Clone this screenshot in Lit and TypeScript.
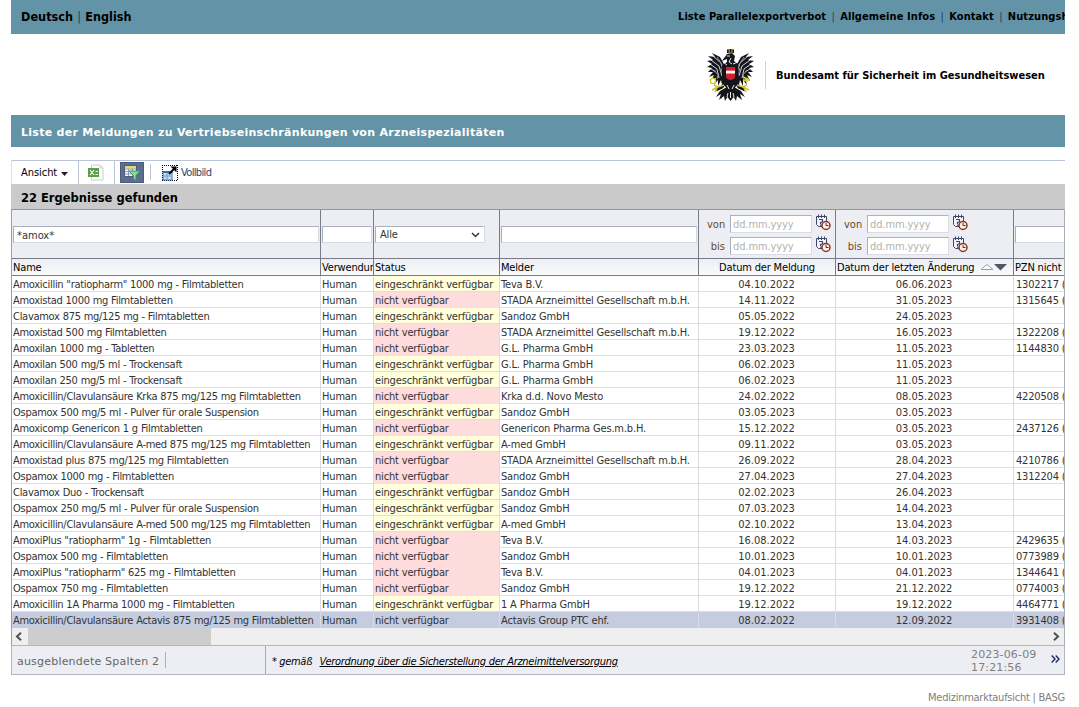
import { LitElement, html, css, svg } from 'lit';
import { customElement, property } from 'lit/decorators.js';
import { classMap } from 'lit/directives/class-map.js';

type Row = [name: string, limited: boolean, reporter: string, reported: string, changed: string, pzn: string];

const ROWS: Row[] = [
  ['Amoxicillin "ratiopharm" 1000 mg - Filmtabletten', true, 'Teva B.V.', '04.10.2022', '06.06.2023', '1302217 ('],
  ['Amoxistad 1000 mg Filmtabletten', false, 'STADA Arzneimittel Gesellschaft m.b.H.', '14.11.2022', '31.05.2023', '1315645 ('],
  ['Clavamox 875 mg/125 mg - Filmtabletten', true, 'Sandoz GmbH', '05.05.2022', '24.05.2023', ''],
  ['Amoxistad 500 mg Filmtabletten', false, 'STADA Arzneimittel Gesellschaft m.b.H.', '19.12.2022', '16.05.2023', '1322208 ('],
  ['Amoxilan 1000 mg - Tabletten', false, 'G.L. Pharma GmbH', '23.03.2023', '11.05.2023', '1144830 ('],
  ['Amoxilan 500 mg/5 ml - Trockensaft', true, 'G.L. Pharma GmbH', '06.02.2023', '11.05.2023', ''],
  ['Amoxilan 250 mg/5 ml - Trockensaft', true, 'G.L. Pharma GmbH', '06.02.2023', '11.05.2023', ''],
  ['Amoxicillin/Clavulansäure Krka 875 mg/125 mg Filmtabletten', false, 'Krka d.d. Novo Mesto', '24.02.2022', '08.05.2023', '4220508 ('],
  ['Ospamox 500 mg/5 ml - Pulver für orale Suspension', true, 'Sandoz GmbH', '03.05.2023', '03.05.2023', ''],
  ['Amoxicomp Genericon 1 g Filmtabletten', false, 'Genericon Pharma Ges.m.b.H.', '15.12.2022', '03.05.2023', '2437126 ('],
  ['Amoxicillin/Clavulansäure A-med 875 mg/125 mg Filmtabletten', true, 'A-med GmbH', '09.11.2022', '03.05.2023', ''],
  ['Amoxistad plus 875 mg/125 mg Filmtabletten', false, 'STADA Arzneimittel Gesellschaft m.b.H.', '26.09.2022', '28.04.2023', '4210786 ('],
  ['Ospamox 1000 mg - Filmtabletten', false, 'Sandoz GmbH', '27.04.2023', '27.04.2023', '1312204 ('],
  ['Clavamox Duo - Trockensaft', true, 'Sandoz GmbH', '02.02.2023', '26.04.2023', ''],
  ['Ospamox 250 mg/5 ml - Pulver für orale Suspension', true, 'Sandoz GmbH', '07.03.2023', '14.04.2023', ''],
  ['Amoxicillin/Clavulansäure A-med 500 mg/125 mg Filmtabletten', true, 'A-med GmbH', '02.10.2022', '13.04.2023', ''],
  ['AmoxiPlus "ratiopharm" 1g - Filmtabletten', false, 'Teva B.V.', '16.08.2022', '14.03.2023', '2429635 ('],
  ['Ospamox 500 mg - Filmtabletten', false, 'Sandoz GmbH', '10.01.2023', '10.01.2023', '0773989 ('],
  ['AmoxiPlus "ratiopharm" 625 mg - Filmtabletten', false, 'Teva B.V.', '04.01.2023', '04.01.2023', '1344641 ('],
  ['Ospamox 750 mg - Filmtabletten', false, 'Sandoz GmbH', '19.12.2022', '21.12.2022', '0774003 ('],
  ['Amoxicillin 1A Pharma 1000 mg - Filmtabletten', true, '1 A Pharma GmbH', '19.12.2022', '19.12.2022', '4464771 ('],
  ['Amoxicillin/Clavulansäure Actavis 875 mg/125 mg Filmtabletten', false, 'Actavis Group PTC ehf.', '08.02.2022', '12.09.2022', '3931408 ('],
];

const wing = svg`
  <path fill="#15151c" d="M20 24 L17 15 L13 8 L5 4 L8 8 L1 7 L6 11 L0 12 L5 15 L0 18 L5 19 L1 23 L6 23 L2 28 L7 26 L4 32 L9 29 L7 36 L11 31 L11 37 L14 31 L15 36 L18 30 L20 34 Z"/>
  <path stroke="#fff" stroke-width=".8" fill="none" d="M6 7 L14 14 L17 24 M4 11 L12 17 L15 27 M3 15 L10 20 L12 29 M4 20 L9 23 M17 17 L19 28"/>
  <path stroke="#8d8db0" stroke-width="1" fill="none" d="M10 8 L16 17 M7 21 L11 26 L10 30 M14 19 L17 30"/>
  <path stroke="#15151c" stroke-width="3" fill="none" d="M19 32 L15 38 L9 41"/>
  <path stroke="#cfc22c" stroke-width="1.600" fill="none" d="M17 36 L11 38 L5 41 M11 38 L7 36 M10 39 L8 43"/>
  <path fill="#15151c" d="M20 38 L13 42 L9 48 L14 45 L12 51 L17 47 L18 52 L22 45 Z"/>`;

const eagle = html`<svg class="eagle" width="47" height="52" viewBox="0 0 47 52" aria-label="Bundesadler">
  <g>${wing}</g>
  <g transform="translate(47 0) scale(-1 1)">${wing}</g>
  <path fill="#15151c" d="M18 8 L20 5 L25 4 L28 7 L27 12 L31 15 L32 33 L27 40 L28 46 L23.500 52 L19 46 L20 40 L15 33 L15 16 L20 13 L20 10 L15 12 L17 9 Z"/>
  <path fill="#8e7b26" d="M20 0 H27 L26.500 4 H20.500 Z"/>
  <path fill="#15151c" d="M20 1 h1.500 v3 h-1.500z M23 0 h1.200 v3.500 h-1.200z M25.700 1 h1.300 v3 h-1.300z"/>
  <path stroke="#fff" stroke-width=".9" fill="none" d="M20 7 h3 M16 13 L20 16 M26 15 L31 13 M24 9 L22 13 L25 15 M20 36 L22 40 M27 36 L25 40 M23.500 43 V49 M21 44 L20 48 M26 44 L27 48"/>
  <path fill="#d3202e" d="M19 18 H28 V28 Q28 30 23.500 31 Q19 30 19 28 Z"/>
  <path fill="#fff" d="M19 21.700 H28 V24.500 H19 Z"/>
  <circle cx="6" cy="32" r="2.600" fill="#fff" stroke="#d8cc20" stroke-width="1.400"/>
  <path stroke="#d8cc20" stroke-width="1.800" fill="none" d="M36 28 L43 31 M36 31 L41 32"/>
</svg>`;

const calendar = html`<svg class="cal" width="16" height="17" viewBox="0 0 16 17">
  <path d="M1.500 2.500 H11.500 V12.500 H3.500 L1.500 10.500 Z" fill="#f4f5fb" stroke="#3d4569"/>
  <path d="M3.500 0.500 V4 M6.500 0.500 V4 M9.500 0.500 V4" stroke="#3d4569"/>
  <path d="M4 5.500 H7.500 V7.800 L5.500 8.500 V10 M5 11.200 h1.500" fill="none" stroke="#3f4870" stroke-width="1.200"/>
  <circle cx="11" cy="11.500" r="4" fill="#fff3e2" stroke="#8b3226" stroke-width="1.500"/>
  <path d="M11 9 V11.500 H13.500" fill="none" stroke="#54272a"/>
</svg>`;

@customElement('date-range')
class DateRange extends LitElement {
  static styles = css`
    :host { display: grid; grid-template-columns: 19px 82px 16px; grid-auto-rows: 18px; column-gap: 4px; row-gap: 4px; padding: 5px 0 0 7px; align-items: center; }
    label { color: #6b4a1c; text-align: right; font-size: 11px; line-height: 18px; padding-top: 1px; margin-right: 1px; letter-spacing: 0; white-space: nowrap; }
    input { box-sizing: border-box; width: 82px; height: 18px; margin: 0; padding: 1px 2px 0; border: 1px solid #d9dce3; border-top-color: #aab2c0; border-left-color: #aab2c0; background: #fff; font: inherit; letter-spacing: -.1px; outline: 0; }
    input::placeholder { color: #b3b3ae; opacity: 1; }
    .cal { display: block; margin: -4px 0 0 -1px; }
  `;
  render() {
    return html`
      <label>von</label><input placeholder="dd.mm.yyyy" />${calendar}
      <label>bis</label><input placeholder="dd.mm.yyyy" />${calendar}`;
  }
}

@customElement('report-grid')
class ReportGrid extends LitElement {
  @property({ attribute: false }) rows: Row[] = [];

  static styles = css`
    :host { display: block; border-left: 1px solid #999da6; border-right: 1px solid #a9adb6; overflow: hidden; }
    .line { display: grid; grid-template-columns: 309px 53px 126px 199px 137px 178px 50px; }
    .line > div { box-sizing: border-box; min-width: 0; overflow: hidden; white-space: nowrap; border-right: 1px solid #d9dbe2; padding-left: 1px; }
    .line > div:last-child { border-right: 0; }
    .filters { height: 49px; background: #edeef4; border-top: 1px solid #8f939c; box-sizing: border-box; }
    .filters > div, .heads > div { border-right-color: #777c88; }
    .filters > .text { padding: 16px 1px 0 1px; }
    .field { box-sizing: border-box; display: block; width: 100%; height: 17px; border: 1px solid #d6d9e2; border-top-color: #aab0bd; border-left-color: #aab0bd; background: #fff; padding: 1px 3px 0; margin: 0; font: inherit; color: #333; outline: 0; }
    .choice { width: 110px; display: flex; align-items: center; justify-content: space-between; padding: 0 4px 0 4px; line-height: 17px; }
    .cut { width: 70px; }
    .heads { height: 18px; box-sizing: border-box; border-top: 1px solid #777c88; border-bottom: 1px solid #777c88; background: linear-gradient(#eceef2, #fafafb); color: #000; line-height: 17px; }
    .row { height: 16px; line-height: 17px; color: #333; background: #fff; }
    .row > div { border-bottom: 1px solid #dcdee3; height: 16px; }
    .row > div.name { letter-spacing: -.28px; word-spacing: .15px; }
    .row > div.limited { background: #ffffdc; }
    .row > div.none { background: #ffdcdc; border-bottom-color: #ffdcdc; }
    .row.active, .row.active > div.none { background: #c5cce0; }
    .row.active > div, .row.active > div.none { border-bottom-color: #c5cce0; }
    .line > div.mid { text-align: center; padding: 0; }
    .row > div.mid { letter-spacing: 0; padding-right: 1px; }
    .sorted { display: flex; align-items: center; gap: 6px; }
    .arrows { flex: none; }
    .row > div.pzn { padding-left: 2px; }
    .bar { display: flex; align-items: center; height: 17px; background: #efefef; }
    .bar svg { flex: none; width: 16px; }
    .thumb { width: 183px; height: 17px; background: #cdcdcd; }
    .rest { flex: 1; }
  `;

  render() {
    return html`
      <div class="line filters">
        <div class="text"><input class="field" .value=${'*amox*'} /></div>
        <div class="text"><input class="field" /></div>
        <div class="text"><div class="field choice">Alle
          <svg width="9" height="6" viewBox="0 0 9 6"><path d="M1 1 L4.500 4.500 L8 1" fill="none" stroke="#333" stroke-width="1.500"/></svg></div></div>
        <div class="text"><input class="field" /></div>
        <div class="dates"><date-range></date-range></div>
        <div class="dates"><date-range></date-range></div>
        <div class="text"><input class="field cut" /></div>
      </div>
      <div class="line heads">
        <div>Name</div><div>Verwendung</div><div>Status</div><div>Melder</div>
        <div class="mid">Datum der Meldung</div>
        <div class="sorted">Datum der letzten Änderung
          <svg class="arrows" width="28" height="8" viewBox="0 0 28 8"><path d="M1 6.500 L7 1.500 L13 6.500 Z" fill="#fff" stroke="#9a9da5"/><path d="M14 1 H27 L20.500 7.500 Z" fill="#4e5668"/></svg></div>
        <div>PZN nicht verfügbar</div>
      </div>
      ${this.rows.map(([name, limited, reporter, reported, changed, pzn], i) => html`
        <div class=${classMap({ line: true, row: true, active: i === this.rows.length - 1 })}>
          <div class="name">${name}</div><div>Human</div>
          <div class=${limited ? 'limited' : 'none'}>${limited ? 'eingeschränkt verfügbar' : 'nicht verfügbar'}</div>
          <div>${reporter}</div><div class="mid">${reported}</div><div class="mid">${changed}</div><div class="pzn">${pzn}</div>
        </div>`)}
      <div class="bar">
        <svg height="9" viewBox="0 0 16 9"><path d="M9 .8 L5 4.500 L9 8.200" fill="none" stroke="#505050" stroke-width="2"/></svg>
        <div class="thumb"></div><div class="rest"></div>
        <svg height="9" viewBox="0 0 16 9"><path d="M6 .8 L10 4.500 L6 8.200" fill="none" stroke="#505050" stroke-width="2"/></svg>
      </div>`;
  }
}

@customElement('app-root')
class AppRoot extends LitElement {
  static styles = css`
    :host { display: block; box-sizing: border-box; width: 1079px; height: 707px; padding: 0 14px 0 11px; overflow: hidden; background: #fff; color: #000; font-family: "DejaVu Sans Condensed", "DejaVu Sans", sans-serif; font-stretch: condensed; font-size: 11px; letter-spacing: -.17px; }
    .top { height: 34px; background: #6393a7; display: flex; justify-content: space-between; white-space: pre; overflow: hidden; line-height: 33px; font-weight: bold; }
    .lang { padding-left: 10px; font-size: 12.500px; letter-spacing: .05px; line-height: 34px; }
    .lang .sep { margin: 0 .5px; }
    .links { width: 387px; flex: none; overflow: hidden; letter-spacing: .09px; }
    .links .sep { margin: 0 -1.200px; }
    .sep { font-weight: normal; color: #24414f; }
    .brand { height: 81px; display: flex; align-items: center; padding-left: 696px; box-sizing: border-box; }
    .agency { margin-left: 11px; border-left: 1px solid #d2d2d2; height: 28px; line-height: 29px; padding-left: 10px; font-weight: bold; white-space: nowrap; letter-spacing: 0; }
    .title { height: 32px; line-height: 36px; padding-left: 10px; background: #6393a7; color: #fff; font-weight: bold; font-family: "DejaVu Sans", sans-serif; font-stretch: normal; letter-spacing: .29px; }
    .tools { margin-top: 13px; height: 24px; display: flex; box-sizing: border-box; border-top: 1px solid #b9c3d6; border-left: 1px solid #dcdfe8; }
    .view { width: 67px; box-sizing: border-box; border-right: 1px solid #b9c3d6; padding: 1px 0 0 9px; line-height: 24px; display: flex; align-items: center; gap: 4px; letter-spacing: -.05px; }
    .view svg { margin-top: 2px; }
    .sheet { width: 36px; box-sizing: border-box; border-right: 1px solid #b9c3d6; display: flex; align-items: center; padding-left: 9px; }
    .toggle { margin: 1px 0 0 5px; width: 24px; height: 21px; background: #5c6e90; box-shadow: inset 0 0 0 1px #4b5c7c; display: grid; place-items: center; }
    .tick { width: 1px; height: 16px; background: #b9c3d6; margin: 3px 11px 0 6px; }
    .full { display: flex; align-items: center; gap: 3px; color: #1b4a70; line-height: 22px; letter-spacing: -.65px; }
    .count { height: 25px; padding-left: 10px; background: #cacaca; font: bold 11.500px/28px "DejaVu Sans", sans-serif; font-stretch: normal; letter-spacing: 0; }
    .foot { height: 30px; box-sizing: border-box; background: #edeef4; border: 1px solid #b4b6bf; display: flex; color: #666; }
    .hidden { width: 254px; box-sizing: border-box; border-right: 1px solid #a9abb5; padding: 6px 0 0 5px; display: flex; font-family: "DejaVu Sans", sans-serif; font-stretch: normal; letter-spacing: .2px; }
    .hidden span { border-right: 1px solid #aeb0ba; height: 16px; line-height: 19px; padding-right: 6px; }
    .law { flex: 1; padding-left: 6px; line-height: 31px; color: #000; font-style: italic; white-space: pre; letter-spacing: -.27px; word-spacing: -.4px; }
    .law a { text-decoration: underline; word-spacing: 0; }
    .time { width: 74px; padding: 2px 0 0; font: 11px/13px "DejaVu Sans", sans-serif; font-stretch: normal; letter-spacing: .15px; color: #808080; }
    .more { width: 19px; display: flex; align-items: center; padding: 0 0 3px 6px; box-sizing: border-box; }
    .owner { padding-top: 15px; line-height: 16px; text-align: right; color: #808080; letter-spacing: -.25px; }
  `;

  render() {
    const bar = (gap: string) => html`<span class="sep">${gap}|${gap}</span>`;
    return html`
      <div class="top">
        <div class="lang">Deutsch${bar(' ')}English</div>
        <div class="links">Liste Parallelexportverbot${bar('  ')}Allgemeine Infos${bar('  ')}Kontakt${bar('  ')}Nutzungshinweise</div>
      </div>
      <div class="brand">${eagle}<div class="agency">Bundesamt für Sicherheit im Gesundheitswesen</div></div>
      <div class="title">Liste der Meldungen zu Vertriebseinschränkungen von Arzneispezialitäten</div>
      <div class="tools">
        <div class="view">Ansicht <svg width="7" height="4" viewBox="0 0 7 4"><path d="M0 0 H7 L3.500 4 Z" fill="#222"/></svg></div>
        <div class="sheet"><svg width="16" height="17" viewBox="0 0 16 17">
          <path d="M3.500 1 H12 L15 4 V16 H3.500 Z" fill="#fff" stroke="#c9ced4"/><path d="M12 1 V4 H15" fill="none" stroke="#c9ced4"/>
          <rect x="0" y="4" width="11" height="9" fill="#5d9c4c"/><path d="M2 6 L6 11 M6 6 L2 11 M7.500 10.500 H10 M7.500 7.500 H10" stroke="#f2ffe9" stroke-width="1.200"/></svg></div>
        <div class="toggle"><svg width="18" height="18" viewBox="0 0 18 18">
          <rect x="1.500" y="1.500" width="12" height="11" fill="#f6f6ff" stroke="#4c5b83"/><rect x="2" y="2" width="11" height="2.600" fill="#e8d873"/>
          <path d="M2 5 H13 M2 7.500 H13 M2 10 H13 M5.500 5 V12 M9.500 5 V12" stroke="#7b87ad" stroke-width=".8"/>
          <path d="M6 7 H17 L13 11.500 V16.500 L10.500 14.500 V11.500 Z" fill="#8ed79c" stroke="#3d9c5b"/></svg></div>
        <div class="tick"></div>
        <div class="full"><svg width="16" height="16" viewBox="0 0 16 16">
          <rect x=".5" y=".5" width="15" height="15" fill="#fff"/>
          <path d="M0 .5 H16 M0 15.500 H16 M.5 0 V16 M15.500 0 V16" stroke="#000" stroke-dasharray="1 1"/>
          <rect x="1" y="7" width="9" height="8" fill="#c6dbf4" stroke="#4172b4"/><rect x="1" y="6" width="9.500" height="2" fill="#3d6cae"/><path d="M1 11 H10 M5 8 V15" stroke="#6f98cf"/>
          <path d="M7 9 L12 4" stroke="#000" stroke-width="2"/><path d="M8.500 1.500 H14.500 V7.500 Z" fill="#000"/></svg>Vollbild</div>
      </div>
      <div class="count">22 Ergebnisse gefunden</div>
      <report-grid .rows=${ROWS}></report-grid>
      <div class="foot">
        <div class="hidden"><span>ausgeblendete Spalten 2</span></div>
        <div class="law">* gemäß   <a>Verordnung über die Sicherstellung der Arzneimittelversorgung</a></div>
        <div class="time">2023-06-09<br />17:21:56</div>
        <div class="more"><svg width="9" height="8" viewBox="0 0 9 8"><path d="M.7 .5 L4 4 L.7 7.500 M4.700 .5 L8 4 L4.700 7.500" fill="none" stroke="#1b2f60" stroke-width="1.400"/></svg></div>
      </div>
      <div class="owner">Medizinmarktaufsicht | BASG</div>`;
  }
}
